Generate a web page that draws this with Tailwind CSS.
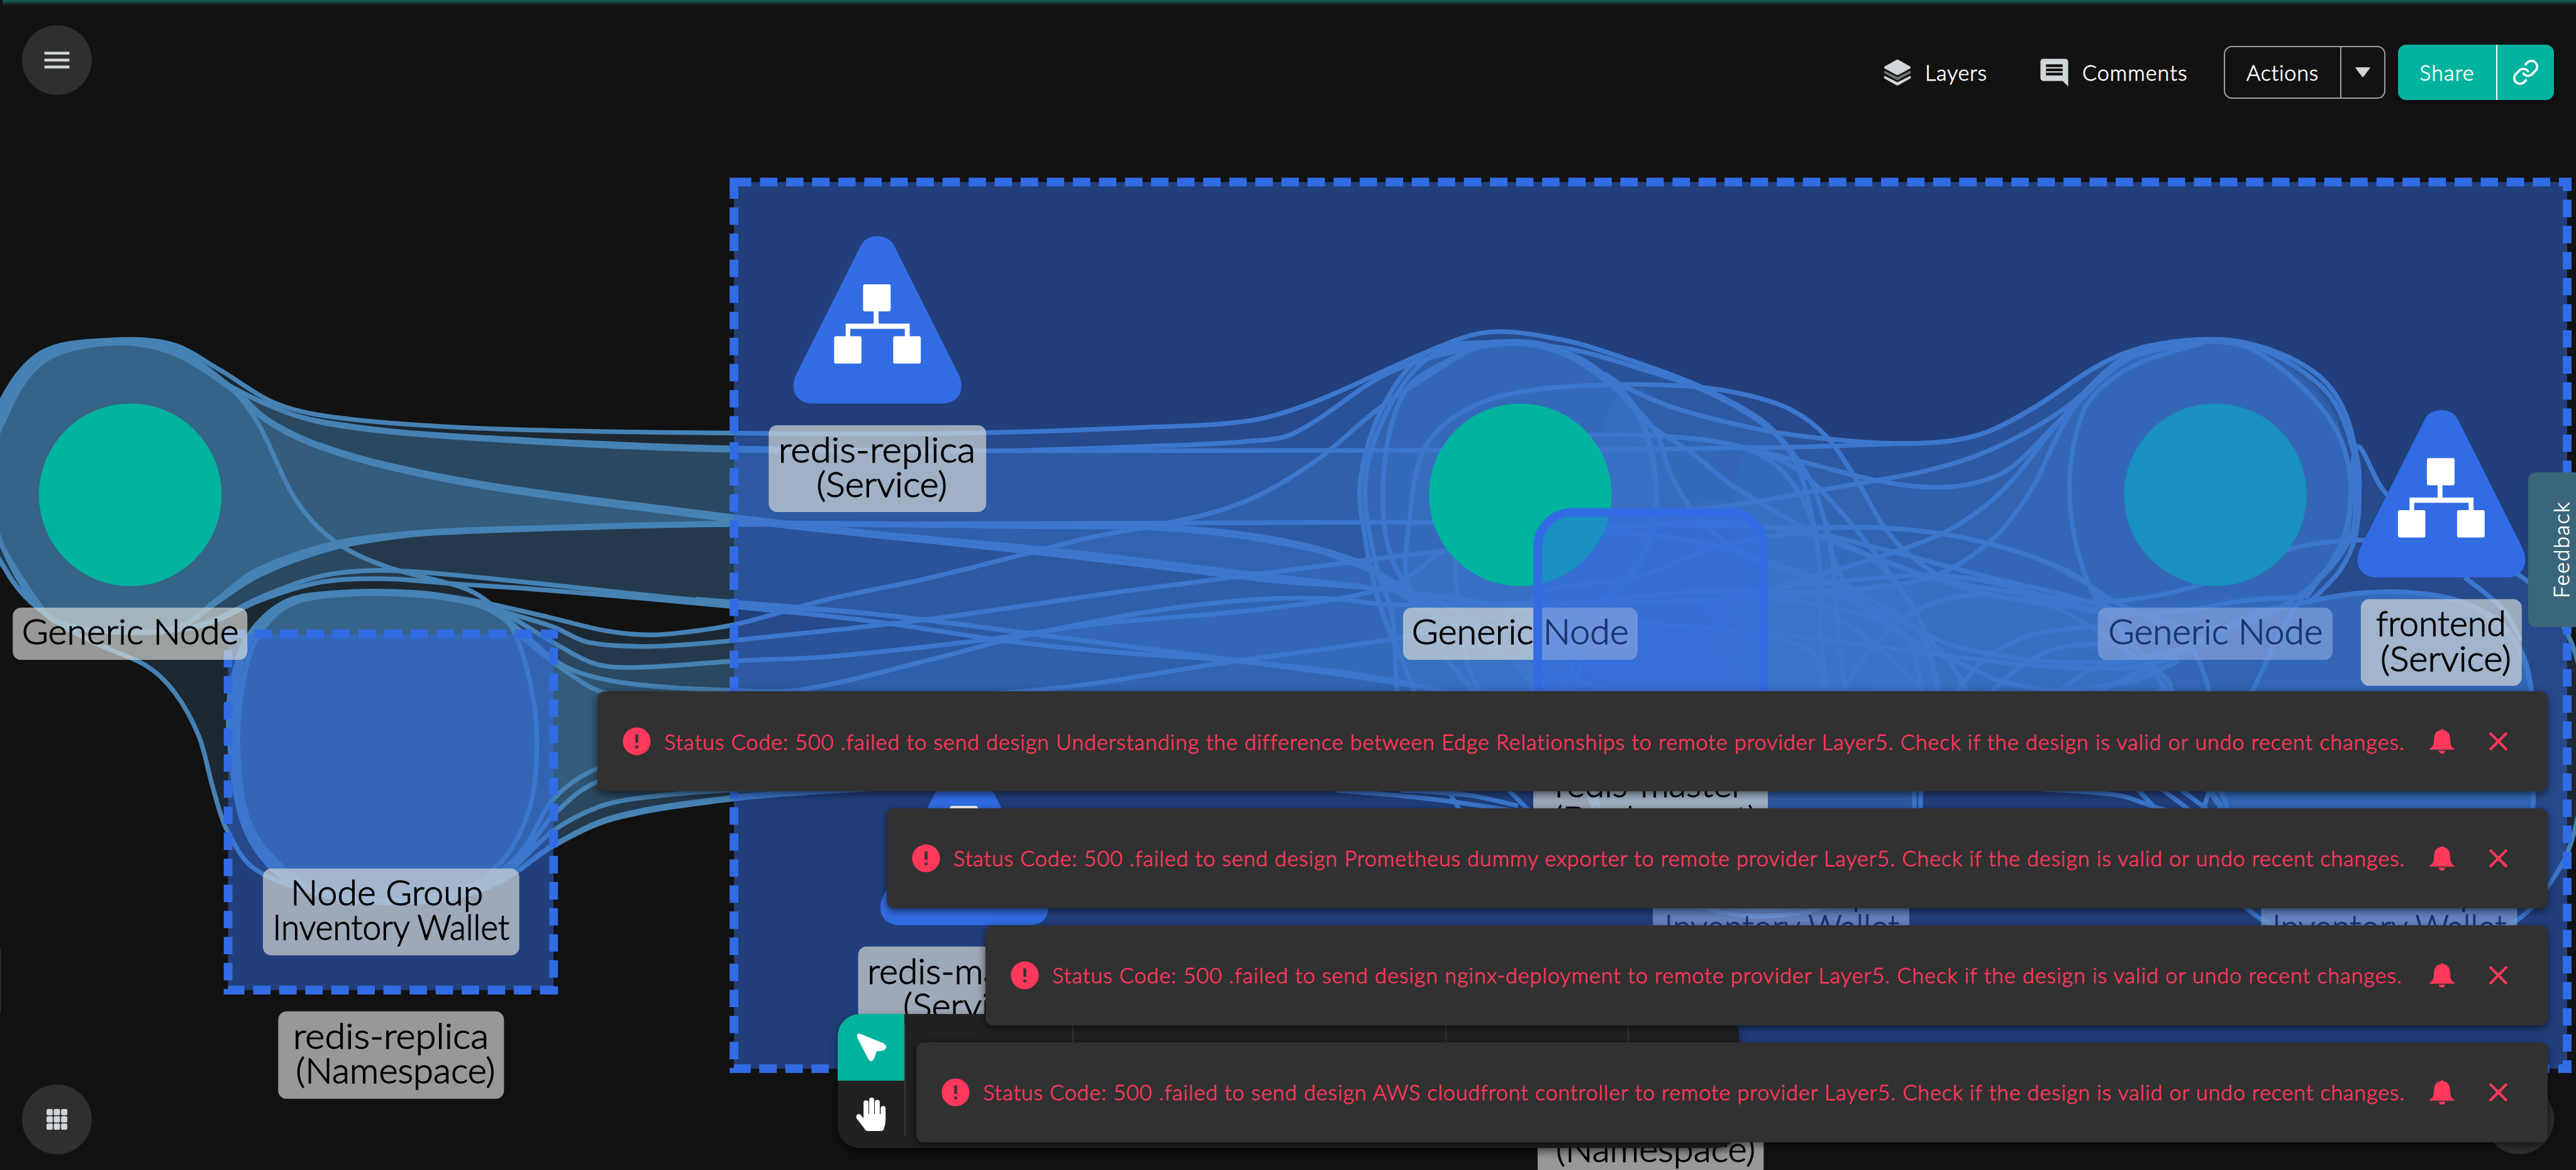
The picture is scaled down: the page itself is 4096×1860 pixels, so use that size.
<!DOCTYPE html>
<html lang="en">
<head>
<meta charset="utf-8">
<title>Design canvas</title>
<script src="https://cdn.jsdelivr.net/npm/@tailwindcss/browser@4"></script>
</head>
<body class="bg-[#121212]">
<div class="relative w-[4096px] h-[1860px] overflow-hidden bg-[#121212] font-['Lato',sans-serif] font-light text-white">

<svg class="absolute inset-0 w-[4096px] h-[1860px]" viewBox="0 0 5556 2523" preserveAspectRatio="none">
  <defs>
    <g id="service">
      <path fill="#326ce5" d="M1856 531C1867 502 1918 502 1929 531L2067 806C2085 845 2063 870 2034 870H1753C1722 870 1700 845 1718 806Z"/>
      <g fill="#fff">
        <rect x="1861.500" y="613" width="59.500" height="58.500" rx="4"/>
        <rect x="1799" y="725" width="59" height="59" rx="4"/>
        <rect x="1926.500" y="725" width="59.500" height="59" rx="4"/>
        <path d="M1884.500 668h10.500v30h67v28h-10.500v-17h-117.500v17h-10v-28h60.500z"/>
      </g>
    </g>
  </defs>
  <g id="fills" fill="#4682b4" fill-opacity=".2"></g>
  <g id="lines" fill="none" stroke="#4682b4" stroke-width="10"></g>

  <circle cx="4778" cy="1067" r="197" fill="#00b39f"/>
  <g fill="#d7dad6" fill-opacity=".68">
    <rect x="4525" y="1310.500" width="506" height="112.500" rx="18"/>
    <rect x="3565" y="1873" width="553" height="187" rx="18"/>
    <rect x="4877" y="1873" width="552" height="187" rx="18"/>
  </g>
  <g font-size="74" fill="#000" stroke="#000" stroke-width="1.700">
    <text x="4547" y="1389" textLength="463" lengthAdjust="spacingAndGlyphs">Generic Node</text>
    <text x="3628" y="1952" textLength="409" lengthAdjust="spacingAndGlyphs">Node Group</text>
    <text x="3590" y="2026" textLength="507" lengthAdjust="spacingAndGlyphs">Inventory Wallet</text>
    <text x="4939" y="1952" textLength="409" lengthAdjust="spacingAndGlyphs">Node Group</text>
    <text x="4901" y="2026" textLength="505" lengthAdjust="spacingAndGlyphs">Inventory Wallet</text>
  </g>

  <g fill="#326ce5" fill-opacity=".5">
    <rect x="1583" y="392.500" width="3954" height="1912"/>
    <rect x="492" y="1367" width="702" height="768"/>
  </g>
  <g fill="none" stroke="#326ce5" stroke-width="18.800" stroke-dasharray="37.500 18.730">
    <path d="M1583 392.500H5537V2304.500H1583Z"/>
    <path d="M492 1367H1194V2135H492Z"/>
  </g>

  <circle cx="281" cy="1067" r="197" fill="#00b39f"/>
  <circle cx="3279" cy="1067" r="197" fill="#00b39f"/>
  <g fill="#d7dad6" fill-opacity=".68">
    <rect x="27.500" y="1310.500" width="506" height="112.500" rx="18"/>
    <rect x="3026" y="1310.500" width="506" height="112.500" rx="18"/>
  </g>
  <g font-size="74" fill="#000" stroke="#000" stroke-width="1.700">
    <text x="47" y="1389" textLength="468" lengthAdjust="spacingAndGlyphs">Generic Node</text>
    <text x="3045" y="1389" textLength="468" lengthAdjust="spacingAndGlyphs">Generic Node</text>
  </g>
  <rect x="3316.500" y="1105" width="488" height="500" rx="74" fill="#326ce5" fill-opacity=".5" stroke="#326ce5" stroke-width="18.800"/>

  <use href="#service"/>
  <use href="#service" x="3373" y="375"/>
  <use href="#service" x="187.500" y="1125"/>

  <g fill="#d7dad6" fill-opacity=".68">
    <rect x="1658" y="917" width="469" height="187" rx="18"/>
    <rect x="567" y="1873" width="553" height="187" rx="18"/>
    <rect x="600" y="2181" width="487" height="188.500" rx="18"/>
    <rect x="5092" y="1292" width="347" height="187" rx="18"/>
    <rect x="1851" y="2041" width="458" height="187" rx="18"/>
    <rect x="3307" y="1640" width="506" height="190" rx="18"/>
    <rect x="3316.500" y="2350" width="487.500" height="188" rx="18"/>
  </g>
  <g font-size="74" fill="#000" stroke="#000" stroke-width="1.700">
    <text x="1679" y="997" textLength="425" lengthAdjust="spacingAndGlyphs">redis-replica</text>
    <text x="1761" y="1072" textLength="282" lengthAdjust="spacingAndGlyphs">(Service)</text>
    <text x="627" y="1952" textLength="415" lengthAdjust="spacingAndGlyphs">Node Group</text>
    <text x="588" y="2026" textLength="511" lengthAdjust="spacingAndGlyphs">Inventory Wallet</text>
    <text x="632" y="2261" textLength="422" lengthAdjust="spacingAndGlyphs">redis-replica</text>
    <text x="638" y="2336" textLength="430" lengthAdjust="spacingAndGlyphs">(Namespace)</text>
    <text x="5125" y="1372" textLength="280" lengthAdjust="spacingAndGlyphs">frontend</text>
    <text x="5134" y="1447" textLength="282" lengthAdjust="spacingAndGlyphs">(Service)</text>
    <text x="1871" y="2121" textLength="415" lengthAdjust="spacingAndGlyphs">redis-master</text>
    <text x="1948" y="2196" textLength="282" lengthAdjust="spacingAndGlyphs">(Service)</text>
    <text x="3354" y="1718" textLength="408" lengthAdjust="spacingAndGlyphs">redis-master</text>
    <text x="3351" y="1793" textLength="438" lengthAdjust="spacingAndGlyphs">(Deployment)</text>
    <text x="3354" y="2430" textLength="408" lengthAdjust="spacingAndGlyphs">redis-master</text>
    <text x="3356" y="2505" textLength="430" lengthAdjust="spacingAndGlyphs">(Namespace)</text>
  </g>
  <rect x="0" y="2046" width="1.500" height="136" fill="#3a3a3a"/>
</svg>

<div class="absolute top-0 left-[4px] right-0 h-[9px] bg-gradient-to-b from-[#04685c] to-[#121212]"></div>

<header class="relative flex items-start justify-between pt-[40px] pl-[35px] pr-[35px]">
  <button class="flex items-center justify-center size-[111px] rounded-full bg-[#2f2f2f]">
    <svg class="size-[53px]" viewBox="0 0 24 24" fill="#d1d6d9"><path d="M3 18h18v-2H3zm0-5h18v-2H3zm0-7v2h18V6z"/></svg>
  </button>
  <div class="flex items-center mt-[31px] h-[88px] text-[34px] leading-none tracking-[0.800px] [-webkit-text-stroke:0.800px_currentColor]">
    <svg class="w-[44px] h-[42px]" viewBox="0 0 60 57">
      <path fill="#d1d6d9" d="M2 36L30 50 58 36Q61 40 57 42.500L32 56.300Q30 57.500 28 56.300L3 42.500Q-1 40 2 36Z"/>
      <path fill="#6f7273" stroke="#121212" stroke-width="1.500" d="M2 24L30 38 58 24Q62 29 57 32L32 46Q30 47.200 28 46L3 32Q-2 29 2 24Z"/>
      <path fill="#d1d6d9" stroke="#121212" stroke-width="1" d="M28 .8Q30-.5 32 .8L57 15Q62 18 57 21L32 34.500Q30 35.800 28 34.500L3 21Q-2 18 3 15Z"/>
    </svg>
    <span class="w-[96px] ml-[22px] whitespace-nowrap">Layers</span>
    <svg class="size-[53px] ml-[83px]" viewBox="0 0 24 24" fill="#d1d6d9"><path d="M21.990 4c0-1.100-.89-2-1.990-2H4c-1.100 0-2 .9-2 2v12c0 1.100.9 2 2 2h14l4 4zM18 14H6v-2h12zm0-3H6V9h12zm0-3H6V6h12z"/></svg>
    <span class="w-[168px] ml-[18px] whitespace-nowrap tracking-[1.100px]">Comments</span>
    <div class="flex ml-[57px] w-[257px] h-[84px] rounded-[13px] border-2 border-[#9e9e9e]">
      <div class="flex items-center justify-center w-[185px] border-r-2 border-[#9e9e9e]"><span class="whitespace-nowrap">Actions</span></div>
      <div class="flex items-center justify-center flex-1">
        <svg class="w-[24px] h-[16px]" viewBox="0 0 24 16" fill="#d1d6d9"><path d="M1.500 0h21q2 0 .8 1.500L13 15q-1 1.300-2 0L.7 1.500Q-.5 0 1.500 0z"/></svg>
      </div>
    </div>
    <div class="flex ml-[20px] w-[248px] h-[88px] rounded-[13px] bg-[#00b39f] shadow-[0_4px_8px_rgba(0,0,0,0.5)]">
      <div class="flex items-center justify-center w-[158px] border-r-2 border-white"><span class="whitespace-nowrap tracking-[1.100px]">Share</span></div>
      <div class="flex items-center justify-center flex-1">
        <svg class="size-[44px]" viewBox="0 0 24 24" fill="none" stroke="#fff" stroke-width="2" stroke-linecap="round" stroke-linejoin="round"><path d="M10 13a5 5 0 0 0 7.540.54l3-3a5 5 0 0 0-7.070-7.070l-1.720 1.710"/><path d="M14 11a5 5 0 0 0-7.540-.54l-3 3a5 5 0 0 0 7.070 7.070l1.710-1.710"/></svg>
      </div>
    </div>
  </div>
</header>

<aside class="absolute right-0 top-[751px] w-[76px] h-[246px] rounded-l-[12px] bg-[#3a6679] flex items-center justify-center">
  <span class="-rotate-90 whitespace-nowrap text-[34px] leading-none tracking-[1.800px] [-webkit-text-stroke:0.800px_currentColor] translate-x-[14px]">Feedback</span>
</aside>

<button class="absolute left-[35px] bottom-[25px] flex items-center justify-center size-[111px] rounded-full bg-[#2f2f2f]">
  <svg class="w-[33px] h-[33px]" viewBox="0 0 45 45" fill="#d1d6d9"><rect width="13.500" height="13.500" rx="3"/><rect x="15.700" width="13.500" height="13.500" rx="3"/><rect x="31.500" width="13.500" height="13.500" rx="3"/><rect y="15.700" width="13.500" height="13.500" rx="3"/><rect x="15.700" y="15.700" width="13.500" height="13.500" rx="3"/><rect x="31.500" y="15.700" width="13.500" height="13.500" rx="3"/><rect y="31.500" width="13.500" height="13.500" rx="3"/><rect x="15.700" y="31.500" width="13.500" height="13.500" rx="3"/><rect x="31.500" y="31.500" width="13.500" height="13.500" rx="3"/></svg>
</button>
<div class="absolute right-[35px] bottom-[25px] size-[111px] rounded-full bg-[#2f2f2f]"></div>

<nav class="absolute left-[1332px] top-[1612px] w-[1433px] h-[213px] rounded-[35px] bg-[#212121] overflow-hidden flex shadow-[0_6px_14px_rgba(0,0,0,0.5)]">
  <div class="flex flex-col w-[106px]">
    <div class="flex items-center justify-center h-[106px] bg-[#00b39f]">
      <svg class="w-[47px] h-[45px]" viewBox="0 0 63 60" fill="#fff"><path d="M1 6Q0-2 9 1L58 21Q68 28 59 35 53 38 43 37.500L37 54Q31 64 25 54L2 10Z"/></svg>
    </div>
    <div class="flex items-center justify-center h-[107px] pb-[1px]">
      <svg class="w-[48px] h-[53px]" viewBox="0 0 64 71" fill="#fff"><path d="M16 11a5.300 5.300 0 0 1 10.600 0V35h1.400V5a5.300 5.300 0 0 1 10.600 0V35h1.400V10a5.300 5.300 0 0 1 10.600 0V35h1.900V23a5 5 0 0 1 10.500 0V46Q63 56 59.500 66 58 71 54 71H25Q20 71 18 66L1 44Q-1 37 4 35 9 34 12 39L16 44Z"/></svg>
    </div>
  </div>
  <div class="mt-[17px] w-[2px] h-[177px] bg-[#353535]"></div>
  <div class="mt-[17px] ml-[265px] w-[2px] h-[177px] bg-[#353535]"></div>
  <div class="mt-[17px] ml-[591px] w-[2px] h-[177px] bg-[#353535]"></div>
  <div class="mt-[17px] ml-[288px] w-[2px] h-[177px] bg-[#353535]"></div>
</nav>

<template id="toast">
  <div class="flex items-center h-[159.200px] rounded-[12px] bg-[#313131] pl-[36px] pr-[53px] shadow-[0_4px_14px_rgba(0,0,0,0.6)] text-[#ff385c] text-[34px] leading-none [-webkit-text-stroke:0.800px_currentColor]">
    <svg class="size-[53px] shrink-0" viewBox="0 0 24 24" fill="currentColor"><path d="M12 2C6.480 2 2 6.480 2 12s4.480 10 10 10 10-4.480 10-10S17.520 2 12 2m1 15h-2v-2h2zm0-4h-2V7h2z"/></svg>
    <span class="ml-[17px] flex-1 whitespace-nowrap"></span>
    <svg class="w-[40px] h-[39px] shrink-0 mr-[44px]" viewBox="0 0 54 53" fill="currentColor"><path d="M24 2.500Q27-1.500 30 2.500C41 4.500 44 12 44.500 22 45 34 46 38 54 43V44.500H0V43C8 38 9 34 9.500 22 10 12 13 4.500 24 2.500ZM20 47H34Q33 53 27 53T20 47Z"/></svg>
    <svg class="size-[51px] shrink-0" viewBox="0 0 24 24" fill="currentColor"><path d="M19 6.410 17.590 5 12 10.590 6.410 5 5 6.410 10.590 12 5 17.590 6.410 19 12 13.410 17.590 19 19 17.590 13.410 12z"/></svg>
  </div>
</template>
<section id="toasts" class="absolute right-[45px] bottom-[44.200px] flex flex-col items-end gap-[26.700px]"></section>
</div>

<script>
// Bubble outlines, as x,y pairs on the 5556 x 2523 canvas. Each list is smoothed.
// A leading "!" draws the fill without an outline.
const bubbles = [
  // generic node group -> centre
  "-60,1060 0,870 90,760 240,733 370,742 470,795 600,872 755,904 1071,925 1592,934 2074,934 2457,922 2696,907 2839,865 3082,757 3211,716 3371,733 3514,776 3666,833 3798,905 3864,973 3914,1057 3947,1177 3960,1308 3947,1560 3400,1560 3068,1482 2265,1372 1883,1324 1582,1302 980,1240 816,1230 694,1242 571,1284 440,1345 306,1364 180,1355 102,1327 20,1242",
  "-40,1060 10,880 90,770 250,736 370,750 500,835 620,890 714,912 888,933 1275,955 1592,966 2131,972 2457,963 2686,952 2791,934 3000,802 3211,745 3371,750 3554,800 3699,853 3823,931 3881,1015 3923,1203 3927,1360 3914,1560 3400,1560 3000,1466 2648,1424 2399,1406 2170,1382 1883,1340 1582,1308 1173,1272 980,1259 827,1248 694,1255 560,1295 440,1348 306,1364 180,1355 102,1327",
  "-30,1060 20,880 100,775 240,740 370,760 500,835 620,890 714,915 888,936 1275,960 1592,971 2131,972 3000,971 3604,968 3871,964 4080,957 4196,952 4287,931 4387,879 4528,787 4627,748 4750,732 4843,741 4950,790 5030,860 5075,970 5080,1048 5070,1157 4990,1260 4850,1340 4700,1350 4569,1302 4503,1260 4403,1208 4296,1174 4188,1151 4055,1138 3931,1138 3000,1126 1582,1131 1020,1146 867,1156 714,1183 560,1240 459,1305 400,1345 306,1364 102,1327",
  "-30,1060 20,880 100,775 240,740 370,760 500,835 571,900 673,953 837,1002 1082,1049 1592,1115 1883,1149 2265,1185 2724,1240 3100,1285 3400,1330 3900,1400 3900,1560 3250,1420 3032,1272 2925,1209 2744,1161 2504,1135 2265,1133 1582,1128 1020,1142 867,1151 714,1173 551,1231 459,1300 400,1345 306,1364 102,1327",
  "-30,1060 20,880 100,775 240,740 370,760 500,840 571,905 673,958 837,1008 1082,1056 1592,1123 1883,1155 2265,1195 2724,1250 3100,1295 3246,1412 3050,1300 2925,1215 2744,1168 2504,1140 2265,1136 1582,1131 1020,1142 867,1154 714,1176 551,1238 459,1305 400,1345 306,1364 102,1327",
  // generic node -> wallet
  "-60,1060 0,880 90,765 240,737 370,750 490,829 556,912 638,1078 724,1169 837,1223 1000,1268 1061,1305 1112,1369 1148,1495 1158,1605 1143,1740 1082,1858 980,1926 847,1947 714,1934 551,1875 490,1791 459,1698 429,1588 378,1495 316,1436 204,1386 102,1327 20,1242",
  // wallet -> centre
  "497,1500 530,1380 610,1300 720,1278 890,1277 1020,1295 1184,1331 1306,1360 1398,1369 1480,1363 1592,1345 1787,1292 1997,1248 2217,1193 2361,1157 2552,1121 2696,1077 2839,993 2961,891 3050,830 3211,742 3380,760 3514,860 3560,960 3572,1080 3560,1170 3514,1242 3443,1315 3300,1560 1800,1702 1582,1719 1326,1761 1194,1822 1082,1900 960,1940 847,1945 700,1930 600,1885 530,1790 500,1650",
  "510,1500 540,1380 615,1305 720,1282 890,1281 1020,1297 1090,1320 1194,1352 1265,1384 1378,1394 1480,1390 1592,1380 1997,1336 2418,1276 3000,1201 3112,1188 3400,1150 3693,1125 3871,1148 4014,1190 4097,1266 4146,1349 4163,1412 4160,1560 1800,1706 1582,1723 1326,1765 1194,1824 1082,1900 960,1940 847,1945 700,1930 600,1885 530,1790 507,1650",
  "495,1500 535,1380 615,1302 720,1280 890,1279 1020,1297 1100,1330 1194,1386 1286,1432 1378,1439 1592,1425 1787,1416 2122,1380 2361,1346 2744,1311 3000,1264 3139,1180 3500,1150 3800,1206 4139,1363 4139,1560 1582,1703 1378,1721 1291,1740 1194,1791 1082,1890 960,1935 847,1942 700,1928 600,1880 530,1790 500,1650",
  "500,1500 540,1380 618,1304 720,1282 890,1281 1020,1300 1080,1325 1133,1370 1224,1440 1357,1474 1592,1489 1730,1487 2017,1420 2170,1380 2361,1340 2552,1308 2744,1291 2887,1292 3000,1304 3500,1300 3900,1300 4150,1400 4150,1560 1500,1650 1291,1685 1194,1757 1122,1850 1040,1905 960,1935 847,1942 700,1928 610,1880 535,1790 505,1650",
  "520,1500 550,1385 618,1308 720,1284 890,1283 1020,1302 1080,1330 1133,1380 1224,1450 1296,1491 1500,1530 2246,1487 2648,1428 3014,1376 3400,1300 3900,1300 4150,1560 1500,1600 1291,1656 1194,1723 1122,1840 1020,1910 847,1940 700,1926 610,1870 540,1780 515,1650",
  // loops round the centre node and its wallet
  "2934,1036 2988,867 3082,757 3211,738 3340,745 3461,812 3514,860 3550,939 3572,1048 3568,1133 3514,1242 3443,1315 3350,1560 3060,1560 3050,1490 2979,1315 2947,1176",
  "2945,1036 2998,875 3090,765 3211,740 3340,748 3461,820 3568,927 3604,1024 3649,1098 3724,1172 3815,1219 3914,1247 4014,1281 4138,1360 4220,1450 4250,1560 3060,1560 3000,1315 2965,1206",
  "2983,1048 3000,920 3041,830 3120,780 3211,742 3340,752 3461,815 3550,910 3648,976 3738,1048 3871,1127 3947,1166 4047,1203 4163,1245 4287,1281 4461,1323 4657,1491 4000,1560 3400,1560 3246,1412 3100,1320 3032,1260 2992,1170",
  "3039,1266 3041,1115 3068,976 3139,897 3264,848 3461,830 3657,834 3773,853 3864,884 3939,941 4005,1036 4063,1135 4113,1192 4204,1250 4362,1281 4486,1307 4700,1360 4750,1560 4170,1640 4130,1800 4000,1930 3800,1975 3600,1930 3480,1830 3420,1700 3350,1560 3180,1490",
  "3140,1250 3170,1060 3280,960 3425,939 3559,939 3693,951 3782,973 3848,1020 3898,1098 3923,1203 3927,1360 3914,1560 3400,1560 3200,1500",
  "3300,1300 3541,1242 3693,1182 3871,1148 3931,1138 4055,1138 4188,1151 4296,1174 4403,1208 4503,1260 4611,1402 4677,1491 4150,1640 4120,1800 4000,1920 3800,1962 3600,1920 3490,1830 3430,1700 3330,1560",
  "!3300,1320 3500,1290 3815,1274 4030,1266 4163,1265 4113,1329 4030,1407 3972,1491 4140,1640 4110,1790 3990,1910 3800,1955 3600,1910 3500,1830 3440,1700 3330,1560",
  // centre -> right node
  "!3500,832 3616,881 3806,928 3947,947 4080,956 4196,952 4287,931 4387,879 4528,787 4627,748 4750,732 4843,739 4936,770 5010,818 5056,885 5084,988 5089,1048 5080,1157 5047,1230 4973,1300 4750,1400 4300,1560 3500,1560 3400,1200",
  "!3649,1101 3782,1083 3914,1059 4047,1036 4155,1015 4262,983 4378,928 4470,868 4569,779 4700,738 4843,742 4936,780 5020,865 5060,960 5070,1024 5056,1145 4973,1276 4750,1400 4300,1560 3800,1560",
  "!3757,965 3889,996 4047,1036 4171,1051 4262,1041 4337,1009 4428,921 4495,853 4586,774 4700,740 4843,745 4936,790 5020,875 5060,960 5075,1048 5056,1145 4973,1276 4750,1400 4400,1560 3800,1560",
  "!3914,1242 4047,1203 4188,1151 4279,1093 4345,1030 4445,905 4511,837 4600,770 4700,742 4843,745 4936,800 5020,890 5066,1000 5056,1145 4960,1290 4750,1360 4657,1427 4518,1433 4286,1412 4100,1388",
  "!3815,1274 4030,1266 4163,1245 4246,1203 4320,1140 4387,1046 4437,941 4480,870 4560,790 4720,742 4850,752 4950,820 5030,920 5062,1030 5056,1145 4970,1280 4780,1345 4564,1400 4300,1412 4080,1329",
  // right wallet
  "4440,1560 4657,1427 4843,1340 4964,1300 5121,1277 5214,1279 5307,1297 5381,1333 5428,1388 5460,1490 5462,1640 5450,1780 5300,1880 5000,1880 4850,1820 4760,1700 4700,1640",
  "!4100,1388 4286,1412 4518,1433 4657,1420 4843,1327 4964,1300 5121,1277 5214,1279 5307,1297 5381,1333 5428,1388 5460,1490 5462,1640 5450,1780 5300,1880 5000,1880 4850,1820 4780,1700 4500,1600 4150,1560",
  "!3900,1310 4221,1245 4379,1273 4518,1297 4700,1295 4843,1285 5121,1277 5214,1279 5307,1297 5381,1333 5428,1388 5460,1490 5462,1640 5450,1780 5300,1880 5000,1880 4850,1820 4770,1700 4500,1600 4150,1560",
  "4400,1560 4500,1450 4700,1400 4843,1330 4964,1300 5121,1277 5307,1297 5428,1388 5460,1490 5462,1640 5450,1780 5300,1880 5000,1880 4850,1820 4760,1700 4620,1620",
  "!4420,1560 4520,1480 4700,1400 4843,1330 4964,1300 5121,1277 5307,1297 5428,1388 5460,1490 5462,1640 5450,1780 5300,1880 5000,1880 4850,1820 4760,1700 4620,1620",
  // outer loop round the right-hand pair
  "4964,1290 5056,1170 5084,964 5149,1067 5316,1180 5456,1257 5537,1366 5570,1480 5575,1640 5556,1779 5521,1872 5428,1985 5250,2050 5050,2050 4890,1990 4810,1920 4740,1800 4900,1400"
];
const openLines = [
  "2839,1185 3000,1252 3100,1330 3246,1412 3350,1490",
  "1500,1292 1883,1324 2265,1372 3000,1468",
  "3461,805 3500,832 3616,881 3806,928 3947,947 4080,956 4196,952 4287,931 4387,879 4528,787 4627,748 4750,732 4843,739 4936,770 5010,818 5056,885 5084,988 5089,1048 5080,1157 5047,1230 4980,1300",
  "3649,1101 3782,1083 3914,1059 4047,1036 4155,1015 4262,983 4378,928 4470,868 4569,779 4660,745 4750,736 4850,750 4960,830 5040,930 5070,1048 5050,1170 4973,1290",
  "3757,965 3889,996 4047,1036 4171,1051 4262,1041 4337,1009 4428,921 4495,853 4586,774 4700,740",
  "3815,1274 3914,1242 4047,1203 4188,1151 4279,1093 4345,1030 4445,905 4511,837 4600,770 4750,738",
  "3815,1280 4030,1268 4163,1245 4246,1203 4320,1140 4387,1046 4437,941 4480,870 4560,790",
  "4750,740 4620,780 4544,826 4495,884 4466,1004 4470,1135 4503,1255 4540,1320 4611,1402 4677,1491",
  "3931,1151 4113,1198 4279,1242 4445,1281 4600,1325",
  "3815,1268 4030,1248 4163,1240 4279,1252 4445,1292 4544,1297 4652,1284 4750,1260 4850,1225 4926,1188 5010,1170 5110,1164",
  "4163,1245 4287,1281 4461,1307 4560,1325 4700,1318 4843,1295 4964,1288",
  "3806,978 3881,1015 3989,1125 4097,1266 4146,1349 4163,1412 4179,1491",
  "3964,1266 4080,1355 4155,1400 4246,1438 4320,1470 4445,1488 4611,1464 4700,1424",
  "3972,1491 4030,1407 4113,1329 4196,1292 4287,1280",
  "3815,1281 3964,1287 4080,1329 4196,1386 4304,1412 4445,1428 4611,1423 4700,1400",
  "3815,1365 4113,1402 4362,1433 4569,1441 4700,1418",
  "4221,1491 4279,1423 4378,1370 4528,1349",
  "4296,1491 4370,1428 4453,1394 4528,1389",
  "3939,1125 3964,1229 4030,1308 4113,1376 4146,1491",
  "5316,1245 5400,1315 5437,1382",
  "2880,1704 3080,1722 3274,1750",
  "3020,1704 3170,1715 3274,1738",
  "3115,1690 3150,1750", "3240,1690 3300,1750",
  "4410,1702 4570,1715 4640,1738 4680,1750", "4600,1690 4650,1745", "4660,1700 4720,1745", "4700,1700 4760,1745", "4785,1690 4805,1745"
];
function smooth(s, closed) {
  const p = s.trim().split(/\s+/).map(v => v.split(",").map(Number)), n = p.length;
  const at = i => closed ? p[(i + n) % n] : p[Math.max(0, Math.min(n - 1, i))];
  let d = "M" + p[0];
  for (let i = 0; i < (closed ? n : n - 1); i++) {
    const a = at(i - 1), b = at(i), c = at(i + 1), e = at(i + 2);
    const l = Math.hypot(c[0] - b[0], c[1] - b[1]);
    const la = Math.hypot(b[0] - a[0], b[1] - a[1]) || l, le = Math.hypot(e[0] - c[0], e[1] - c[1]) || l;
    const k1 = l / (l + la) / 3, k2 = l / (l + le) / 3;
    d += `C${(b[0] + (c[0] - a[0]) * k1).toFixed(1)} ${(b[1] + (c[1] - a[1]) * k1).toFixed(1)} ${(c[0] - (e[0] - b[0]) * k2).toFixed(1)} ${(c[1] - (e[1] - b[1]) * k2).toFixed(1)} ${c}`;
  }
  return d + (closed ? "Z" : "");
}
const add = (id, d) => {
  const e = document.createElementNS("http://www.w3.org/2000/svg", "path");
  e.setAttribute("d", d);
  document.getElementById(id).append(e);
};
bubbles.forEach(b => {
  const d = smooth(b.replace("!", ""), true);
  add("fills", d);
  if (b[0] !== "!") add("lines", d);
});
openLines.forEach(l => add("lines", smooth(l, false)));

// name, card width, letter spacing
const toasts = [
  ["Understanding the difference between Edge Relationships", 3101, 1.02],
  ["Prometheus dummy exporter", 2641, 0.98],
  ["nginx-deployment", 2484, 1.05],
  ["AWS cloudfront controller", 2594, 0.96]
];
for (const [name, width, spacing] of toasts) {
  const t = document.getElementById("toast").content.firstElementChild.cloneNode(true);
  t.style.width = width + "px";
  const s = t.querySelector("span");
  s.style.letterSpacing = spacing + "px";
  s.textContent = `Status Code: 500 .failed to send design ${name} to remote provider Layer5. Check if the design is valid or undo recent changes.`;
  document.getElementById("toasts").append(t);
}
</script>
</body>
</html>
